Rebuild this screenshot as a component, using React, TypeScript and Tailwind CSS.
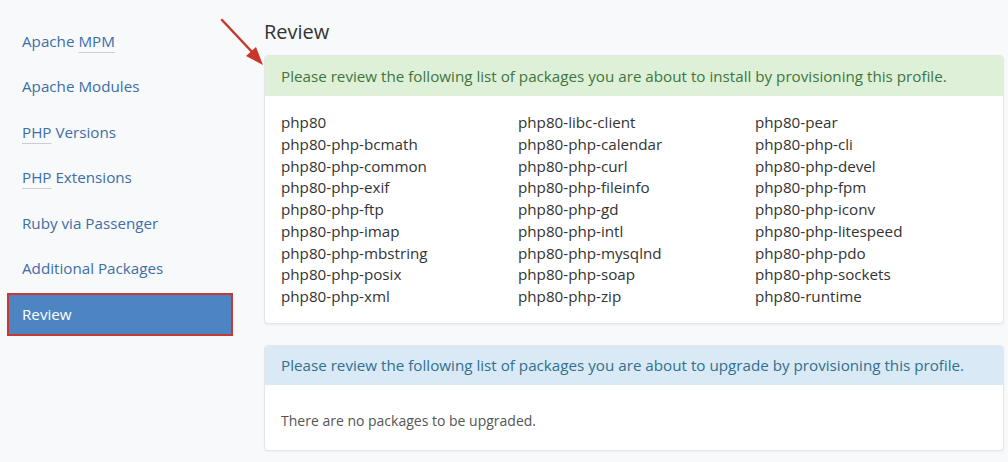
import React from "react";

const nav = [
  { label: <>Apache <span className="underline decoration-[#c9ced6] underline-offset-[5px] decoration-1">MPM</span></> },
  { label: <>Apache Modules</> },
  { label: <><span className="underline decoration-[#c9ced6] underline-offset-[5px] decoration-1">PHP</span> Versions</> },
  { label: <><span className="underline decoration-[#c9ced6] underline-offset-[5px] decoration-1">PHP</span> Extensions</> },
  { label: <>Ruby via Passenger</> },
  { label: <>Additional Packages</> },
];

const cols = [
  ["php80", "php80-php-bcmath", "php80-php-common", "php80-php-exif", "php80-php-ftp", "php80-php-imap", "php80-php-mbstring", "php80-php-posix", "php80-php-xml"],
  ["php80-libc-client", "php80-php-calendar", "php80-php-curl", "php80-php-fileinfo", "php80-php-gd", "php80-php-intl", "php80-php-mysqlnd", "php80-php-soap", "php80-php-zip"],
  ["php80-pear", "php80-php-cli", "php80-php-devel", "php80-php-fpm", "php80-php-iconv", "php80-php-litespeed", "php80-php-pdo", "php80-php-sockets", "php80-runtime"],
];

export default function App() {
  return (
    <div
      className="relative w-[1008px] h-[462px] overflow-hidden bg-[#f8f9fa] flex"
      style={{ fontFamily: '"Open Sans", "Noto Sans", sans-serif' }}
    >
      <div className="w-[264px] shrink-0 pl-[7px] pt-[19.5px] flex flex-col gap-[2.5px]">
        {nav.map((n, i) => (
          <div key={i} className="h-[43px] w-[226px] flex items-center pl-[15px] text-[15.2px] text-[#3d6ea8]">
            <span>{n.label}</span>
          </div>
        ))}
        <div className="h-[43px] w-[226px] flex items-center pl-[13px] text-[15.2px] text-white bg-[#4d85c3] border-2 border-[#c43b33]">
          Review
        </div>
      </div>

      <div className="flex-1 pr-[4px]">
        <h1 className="text-[20px] leading-[28px] text-[#333] pt-[18px] pb-[9px]">Review</h1>
        <div className="bg-white border border-[#e4e6e8] rounded-[4px] shadow-[0_1px_2px_rgba(0,0,0,0.05)] overflow-hidden">
          <div className="h-[40px] bg-[#dff0d8] text-[#3c763d] text-[15.2px] flex items-center pl-[16px]">
            Please review the following list of packages you are about to install by provisioning this profile.
          </div>
          <div className="grid grid-cols-[237px_237px_1fr] pl-[16px] pt-[16px] pb-[15px] text-[15.2px] leading-[21.75px] text-[#333]">
            {cols.map((c, ci) => (
              <div key={ci} className="flex flex-col">
                {c.map((p) => (
                  <div key={p}>{p}</div>
                ))}
              </div>
            ))}
          </div>
        </div>

        <div className="mt-[21px] bg-white border border-[#e4e6e8] rounded-[4px] shadow-[0_1px_2px_rgba(0,0,0,0.05)] overflow-hidden">
          <div className="h-[39px] bg-[#d9e9f5] text-[#31708f] text-[15.2px] flex items-center pl-[16px]">
            Please review the following list of packages you are about to upgrade by provisioning this profile.
          </div>
          <div className="pl-[16px] pt-[25px] pb-[18px] text-[14px] leading-[21.75px] text-[#555]">
            There are no packages to be upgraded.
          </div>
        </div>
      </div>

      <svg className="absolute left-[218px] top-[16px]" width="50" height="54" viewBox="0 0 50 54">
        <line x1="4" y1="4" x2="36" y2="38" stroke="#c9372c" strokeWidth="2.5" strokeLinecap="round" />
        <polygon points="45,49 28,40 38,31" fill="#c9372c" />
      </svg>
    </div>
  );
}
